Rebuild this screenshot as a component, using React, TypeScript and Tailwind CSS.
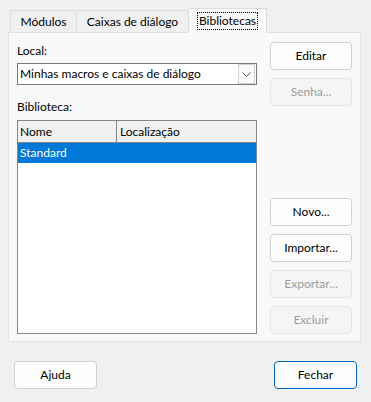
const Btn = ({ label, disabled, primary, className = "" }: { label: string; disabled?: boolean; primary?: boolean; className?: string }) => (
  <div
    className={
      "h-[28px] flex items-center justify-center rounded-[4px] border " +
      (disabled
        ? "bg-[#f5f5f5] border-[#e5e5e5] text-[#9d9d9d] "
        : primary
        ? "bg-[#fdfdfd] border-[#0067c0] text-black "
        : "bg-[#fdfdfd] border-[#d0d0d0] text-black ") +
      className
    }
  >
    {label}
  </div>
);

const App = () => {
  return (
    <div className="w-[371px] h-[402px] bg-[#f0f0f0] text-[12px] text-black flex flex-col" style={{ fontFamily: 'Lato, sans-serif' }}>
      {/* tabs */}
      <div className="flex items-end h-[24px] mt-[8px] ml-[10px] relative z-10">
        <div className="h-[22px] w-[67px] border border-b-0 border-[#dcdcdc] bg-[#f0f0f0] flex items-center justify-center">Módulos</div>
        <div className="h-[22px] w-[112px] border border-b-0 border-l-0 border-[#dcdcdc] bg-[#f0f0f0] flex items-center justify-center">Caixas de diálogo</div>
        <div className="h-[25px] w-[78px] -mb-px border border-b-0 border-l-0 border-[#dcdcdc] bg-[#f9f9f9] flex items-center justify-center">
          <span className="border border-dotted border-black px-[1px] leading-[16px]">Bibliotecas</span>
        </div>
      </div>

      {/* panel */}
      <div className="ml-[8px] w-[353px] h-[310px] border border-[#e2e2e2] bg-[#f9f9f9] flex pl-[8px] pt-[8px] pb-[7px]">
        <div className="w-[240px] flex flex-col">
          <div className="h-[16px] leading-[16px] mt-[2px]">Local:</div>
          <div className="mt-[4px] h-[22px] border border-[#7a7a7a] bg-white flex items-center justify-between">
            <span className="pl-[2px]">Minhas macros e caixas de diálogo</span>
            <div className="w-[17px] h-[20px] mr-[1px] border border-[#cfcfcf] bg-[#fbfbfb] flex items-center justify-center">
              <svg width="9" height="5" viewBox="0 0 9 5" fill="none" stroke="#555" strokeWidth="1">
                <path d="M0.5 0.5 L4.5 4.5 L8.5 0.5" />
              </svg>
            </div>
          </div>
          <div className="h-[16px] leading-[16px] mt-[14px]">Biblioteca:</div>
          <div className="mt-[5px] h-[214px] border border-[#828790] bg-white flex flex-col">
            <div className="h-[22px] flex bg-[#f0f0f0] border-b border-[#828790]">
              <div className="w-[99px] border-r border-[#828790] pl-[2px] flex items-center">Nome</div>
              <div className="flex-1 pl-[3px] flex items-center">Localização</div>
            </div>
            <div className="h-[20px] bg-[#0078d7] text-white pl-[2px] flex items-center">Standard</div>
          </div>
        </div>
        <div className="ml-[13px] w-[82px] flex flex-col justify-between pt-[1px]">
          <div className="flex flex-col gap-[8px]">
            <Btn label="Editar" />
            <Btn label="Senha..." disabled />
          </div>
          <div className="flex flex-col gap-[8px]">
            <Btn label="Novo..." />
            <Btn label="Importar..." />
            <Btn label="Exportar..." disabled />
            <Btn label="Excluir" disabled />
          </div>
        </div>
      </div>

      {/* bottom */}
      <div className="flex justify-between mt-[19px] pl-[14px] pr-[14px]">
        <Btn label="Ajuda" className="w-[83px]" />
        <Btn label="Fechar" primary className="w-[83px]" />
      </div>
    </div>
  );
};

export default App;
